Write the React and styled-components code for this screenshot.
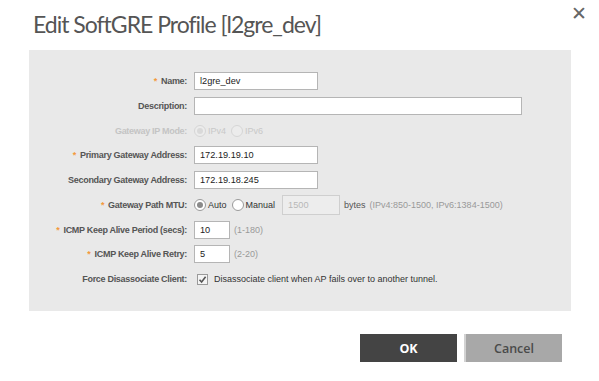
import React from "react";
import styled, { createGlobalStyle } from "styled-components";

const Global = createGlobalStyle`
  html, body { margin: 0; padding: 0; background: #fff; }
  body { font-family: "Liberation Sans", sans-serif; }
  * { box-sizing: border-box; }
`;

const Dialog = styled.div`
  position: relative;
  width: 599px;
  height: 381px;
  background: #fff;
  padding: 9px 28px 0 29px;
`;

const Title = styled.h1`
  margin: 0 0 0 4px;
  height: 41px;
  font-family: "Lato", sans-serif;
  font-weight: 400;
  font-size: 23px;
  letter-spacing: -1px;
  color: #555;
  line-height: 30px;
`;

const Close = styled.button`
  position: absolute;
  top: 2px;
  right: 12px;
  border: 0;
  background: none;
  padding: 0;
  font-family: "DejaVu Sans", sans-serif;
  font-weight: 700;
  font-size: 19px;
  color: #666;
  line-height: 22px;
  cursor: pointer;
`;

const Panel = styled.div`
  width: 542px;
  height: 261px;
  background: #e9e9e9;
  padding-top: 22px;
  display: grid;
  grid-template-columns: 158px 1fr;
  column-gap: 7px;
  row-gap: 6.75px;
  align-content: start;
`;

const Label = styled.label`
  height: 18px;
  display: flex;
  align-items: center;
  justify-content: flex-end;
  font-family: "Liberation Sans", sans-serif;
  font-weight: 700;
  font-size: 9px;
  letter-spacing: -0.3px;
  color: ${(p) => (p.$disabled ? "#c4c4c4" : "#555")};
  white-space: nowrap;
`;

const Star = styled.span`
  color: #f39a3c;
  margin-right: 4px;
`;

const Field = styled.div`
  height: 18px;
  display: flex;
  align-items: center;
  gap: 4px;
  font-family: "Liberation Sans", sans-serif;
  font-size: 9px;
  color: #333;
`;

const Input = styled.div`
  width: ${(p) => p.$w}px;
  height: ${(p) => p.$h || 18}px;
  margin-left: ${(p) => p.$ml || 0}px;
  background: ${(p) => (p.$disabled ? "#ededed" : "#fff")};
  border: 1px solid ${(p) => (p.$disabled ? "#cfcfcf" : "#b5b5b5")};
  display: flex;
  align-items: center;
  padding-left: 5px;
  font-family: "Liberation Sans", sans-serif;
  font-size: 9.2px;
  color: ${(p) => (p.$disabled ? "#b8b8b8" : "#222")};
`;

const Hint = styled.span`
  color: ${(p) => (p.$light ? "#999" : "#555")};
`;

const RadioWrap = styled.span`
  display: inline-flex;
  align-items: center;
  gap: 2px;
  color: ${(p) => (p.$disabled ? "#c8c8c8" : "#333")};
  margin-right: 1px;
`;

const Circle = styled.span`
  width: 12px;
  height: 12px;
  border-radius: 50%;
  border: 1px solid ${(p) => (p.$disabled ? "#d6d6d6" : "#9a9a9a")};
  background: ${(p) => (p.$disabled ? "#ececec" : "#fff")};
  display: inline-flex;
  align-items: center;
  justify-content: center;
  &::after {
    content: "";
    display: ${(p) => (p.$checked ? "block" : "none")};
    width: 6px;
    height: 6px;
    border-radius: 50%;
    background: ${(p) => (p.$disabled ? "#d9d9d9" : "#8a8a8a")};
  }
`;

const Radio = ({ checked, disabled, children }) => (
  <RadioWrap $disabled={disabled}>
    <Circle $checked={checked} $disabled={disabled} />
    {children}
  </RadioWrap>
);

const Box = styled.span`
  width: 11px;
  height: 11px;
  border: 1px solid #9a9a9a;
  background: #f4f4f4;
  display: inline-flex;
  align-items: center;
  justify-content: center;
  margin: 0 2px 0 3px;
`;

const Footer = styled.div`
  display: flex;
  justify-content: flex-end;
  gap: 7px;
  padding: 23px 9px 0 0;
`;

const Button = styled.button`
  width: ${(p) => p.$w}px;
  height: 28px;
  border: 0;
  border-left: ${(p) => (p.$primary ? "0" : "2px solid #d2d2d2")};
  background: ${(p) => (p.$primary ? "#444444" : "#a8a8a8")};
  color: ${(p) => (p.$primary ? "#fff" : "#4a4a4a")};
  font-family: "Open Sans", sans-serif;
  font-weight: ${(p) => (p.$primary ? 700 : 600)};
  font-size: 12.5px;
  padding: 0;
`;

const Row = ({ label, req, disabled, children }) => (
  <>
    <Label $disabled={disabled}>
      {req && <Star>*</Star>}
      {label}
    </Label>
    <Field>{children}</Field>
  </>
);

export default function App() {
  return (
    <>
      <Global />
      <Dialog>
        <Title>Edit SoftGRE Profile [l2gre_dev]</Title>
        <Close aria-label="close">✕</Close>
        <Panel>
          <Row label="Name:" req>
            <Input $w={124}>l2gre_dev</Input>
          </Row>
          <Row label="Description:">
            <Input $w={328} />
          </Row>
          <Row label="Gateway IP Mode:" disabled>
            <Radio checked disabled>IPv4</Radio>
            <Radio disabled>IPv6</Radio>
          </Row>
          <Row label="Primary Gateway Address:" req>
            <Input $w={124}>172.19.19.10</Input>
          </Row>
          <Row label="Secondary Gateway Address:">
            <Input $w={124}>172.19.18.245</Input>
          </Row>
          <Row label="Gateway Path MTU:" req>
            <Radio checked>Auto</Radio>
            <Radio>Manual</Radio>
            <Input $w={58} $h={20} $disabled $ml={2}>1500</Input>
            <Hint>bytes</Hint>
            <Hint $light>(IPv4:850-1500, IPv6:1384-1500)</Hint>
          </Row>
          <Row label="ICMP Keep Alive Period (secs):" req>
            <Input $w={36}>10</Input>
            <Hint $light>(1-180)</Hint>
          </Row>
          <Row label="ICMP Keep Alive Retry:" req>
            <Input $w={36}>5</Input>
            <Hint $light>(2-20)</Hint>
          </Row>
          <Row label="Force Disassociate Client:">
            <Box>
              <svg width="9" height="9" viewBox="0 0 9 9">
                <path d="M1.5 4.8 L3.6 7 L7.6 1.8" fill="none" stroke="#555" strokeWidth="1.6" />
              </svg>
            </Box>
            <span>Disassociate client when AP fails over to another tunnel.</span>
          </Row>
        </Panel>
        <Footer>
          <Button $primary $w={97}>OK</Button>
          <Button $w={98}>Cancel</Button>
        </Footer>
      </Dialog>
    </>
  );
}
